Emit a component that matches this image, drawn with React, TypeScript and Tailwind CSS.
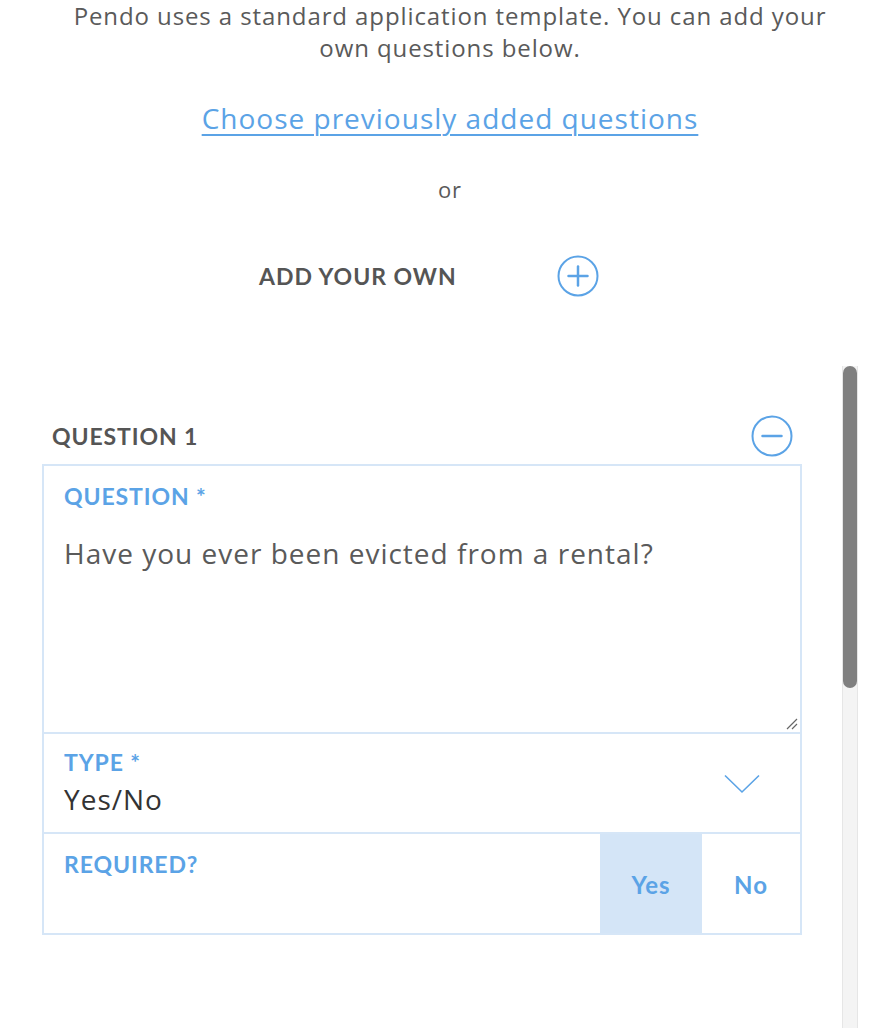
import React from 'react'

const BLUE = 'text-[#5ba3e6]'
const LABEL = 'text-[23px] leading-[28px] font-bold tracking-[0.9px] text-[#5ba3e6]'

function CircleIcon({ minus }: { minus?: boolean }) {
  return (
    <svg width="42" height="42" viewBox="0 0 42 42" fill="none">
      <circle cx="21" cy="21" r="19.5" stroke="#5ba3e6" strokeWidth="2" />
      <path d="M11.5 21h19" stroke="#5ba3e6" strokeWidth="2.5" strokeLinecap="round" />
      {!minus && <path d="M21 11.5v19" stroke="#5ba3e6" strokeWidth="2.5" strokeLinecap="round" />}
    </svg>
  )
}

export default function App() {
  return (
    <div className="w-[884px] h-[1028px] overflow-hidden bg-white font-['Lato',sans-serif] flex flex-col">
      {/* intro */}
      <div className="w-[858px] pl-[42px] flex flex-col items-center h-[366px] shrink-0 font-['Open_Sans',sans-serif]">
        <p className="text-[24px] leading-[32px] tracking-[0.9px] text-[#5a5a5a] text-center w-[790px]">
          Pendo uses a standard application template. You can add your own questions below.
        </p>
        <a className="mt-[36px] text-[28px] leading-[36px] tracking-[1px] text-[#5ba3e6] underline underline-offset-[5px] decoration-[1.5px] cursor-pointer">
          Choose previously added questions
        </a>
        <div className="mt-[37px] text-[22px] leading-[32px] tracking-[1px] text-[#5a5a5a]">or</div>
        <div className="mt-[51px] h-[40px] w-[858px] -ml-[42px] flex items-center justify-center font-['Lato',sans-serif]">
          <span className="text-[23px] font-bold text-[#555] tracking-[1px] w-[200px]">ADD YOUR OWN</span>
          <span className="ml-[98px]">
            <CircleIcon />
          </span>
        </div>
      </div>

      {/* scroll area */}
      <div className="flex flex-1 min-h-0">
        <div className="w-[842px] pl-[42px] pr-[40px] pt-[50px]">
          <div className="h-[40px] flex items-center justify-between pl-[10px] pr-[9px] mb-[8px]">
            <span className="text-[23px] font-bold text-[#555] tracking-[0.9px]">QUESTION 1</span>
            <CircleIcon minus />
          </div>

          <div className="border-2 border-[#d6e6f7]">
            <div className="h-[266px] relative px-[20px] pt-[16px]">
              <div className={LABEL}>QUESTION *</div>
              <div className="mt-[25px] text-[28px] leading-[36px] tracking-[1px] text-[#5a5a5a] font-['Open_Sans',sans-serif]">
                Have you ever been evicted from a rental?
              </div>
              <svg className="absolute right-[2px] bottom-[2px]" width="14" height="14" viewBox="0 0 14 14">
                <path d="M13 3L3 13M13 8L8 13" stroke="#666" strokeWidth="1.2" />
              </svg>
            </div>

            <div className="h-[100px] border-t-2 border-[#d6e6f7] px-[20px] pt-[14px] flex items-start justify-between">
              <div>
                <div className={LABEL}>TYPE *</div>
                <div className="mt-[5px] text-[28px] leading-[36px] tracking-[1px] text-[#333] font-['Open_Sans',sans-serif]">
                  Yes/No
                </div>
              </div>
              <svg className="mt-[26px] mr-[20px]" width="36" height="20" viewBox="0 0 36 20" fill="none">
                <path d="M1 1.5L18 18L35 1.5" stroke="#5ba3e6" strokeWidth="1.6" />
              </svg>
            </div>

            <div className="h-[101px] border-t-2 border-[#d6e6f7] flex">
              <div className="flex-1 px-[20px] pt-[16px]">
                <div className={LABEL}>REQUIRED?</div>
              </div>
              <div className={`w-[102px] bg-[#d4e5f7] flex items-center justify-center pt-[2px] text-[24px] font-bold tracking-[1px] ${BLUE}`}>
                Yes
              </div>
              <div className={`w-[98px] flex items-center justify-center pt-[2px] text-[24px] font-bold tracking-[1px] ${BLUE}`}>
                No
              </div>
            </div>
          </div>
        </div>

        {/* scrollbar */}
        <div className="w-[16px] bg-[#f4f4f4] border-x border-[#e6e6e6] flex justify-center">
          <div className="w-[14px] h-[322px] rounded-full bg-[#808080]" />
        </div>
      </div>
    </div>
  )
}
